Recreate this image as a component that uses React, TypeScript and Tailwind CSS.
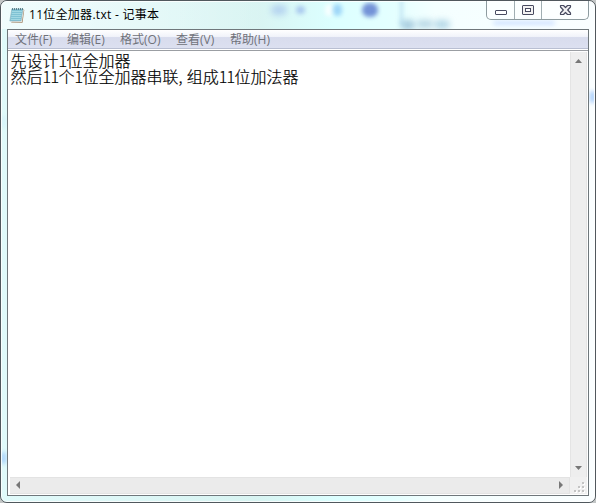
import React from "react";

const menus = [
  { label: "文件", key: "(F)", width: "w-[52px]" },
  { label: "编辑", key: "(E)", width: "w-[53px]" },
  { label: "格式", key: "(O)", width: "w-[56px]" },
  { label: "查看", key: "(V)", width: "w-[54px]" },
  { label: "帮助", key: "(H)", width: "w-[60px]" },
];

const lines = ["先设计1位全加器", "然后11个1位全加器串联,组成11位加法器"];

function TextLine({ text }: { text: string }) {
  return (
    <div className="h-4 whitespace-nowrap">
      {text.split(/([0-9,]+)/).map((part, i) =>
        /^[0-9]/.test(part) ? (
          <span key={i} className="tracking-[-0.6px]">{part}</span>
        ) : part === "," ? (
          <span key={i} className="tracking-[4.2px]">{part}</span>
        ) : (
          <span key={i}>{part}</span>
        ),
      )}
    </div>
  );
}

function NotepadIcon() {
  return (
    <svg width="16" height="17" viewBox="0 0 16 17" className="shrink-0">
      <path d="M2 15.5L13.5 15.8L15.3 3L13.5 2Z" fill="#a08466" />
      <path d="M2 14.8L12.8 15L14.8 3L13.5 2Z" fill="#f4f4ee" />
      <path d="M2.8 2H14L12 14H.8Z" fill="#7fc2d4" stroke="#8cb4bf" strokeWidth=".6" />
      <path d="M3 4.5H13M2.7 6.5H12.6M2.4 8.5H12.3M2.1 10.5H12M1.8 12.5H11.6" stroke="#a9dde7" strokeWidth=".8" />
      <path d="M3.5 1V3M5.5 1V3M7.5 1V3M9.5 1V3M11.5 1V3M13.5 1V3" stroke="#547882" strokeWidth=".9" />
    </svg>
  );
}

function Glow({ place }: { place: string }) {
  return <i className={`pointer-events-none absolute rounded-full ${place}`} />;
}

function WindowButtons() {
  return (
    <div className="absolute right-[6px] top-0 flex h-[19px] w-[103px] rounded-b-[5px] border border-t-0 border-[#8d9b9f] bg-white/50">
      <div className="w-[28px] border-r border-[#a0aeb2]">
        <svg width="27" height="18">
          <rect x="8.5" y="9.5" width="11" height="4" rx=".5" fill="#fff" stroke="#484b60" />
        </svg>
      </div>
      <div className="w-[27px] border-r border-[#a0aeb2]">
        <svg width="26" height="18">
          <rect x="7.5" y="4.5" width="11" height="9" rx=".5" fill="#f3f3f3" stroke="#484b60" />
          <rect x="10.5" y="7.5" width="5" height="3" fill="#fff" stroke="#484b60" />
        </svg>
      </div>
      <svg width="46" height="18">
        <path d="M18.5 4.5H21.5L23.5 6.5L25.5 4.5H28.5V6L25.7 9L28.5 12V13.5H25.5L23.5 11.5L21.5 13.5H18.5V12L21.3 9L18.5 6Z" fill="#f0f0f2" stroke="#484b60" strokeWidth="1.2" strokeLinejoin="round" />
      </svg>
    </div>
  );
}

export default function App() {
  return (
    <div className="h-[503px] w-[596px] overflow-hidden bg-[#c3c6c6]">
      <div className="relative flex h-full flex-col overflow-hidden rounded-[7px] border border-[#50585d] bg-[linear-gradient(90deg,#e0fafa_0%,#dff8f8_15%,#d8f4f2_43%,#dcffff_56%,#e4ffff_66%,#f4ffff_73%,#fafeff_100%)] px-[6px] pb-[6px] font-['Open_Sans','Noto_Sans_CJK_SC',sans-serif]">
        <i className="absolute left-0 top-0 h-[28px] w-[280px] bg-[linear-gradient(90deg,#fff8,#fff0)]" />
        <Glow place="left-[270px] top-[4px] h-[10px] w-4 bg-[#91b0e9]/50 blur-[3px]" />
        <Glow place="left-[295px] top-[5px] h-2 w-[9px] bg-[#88a8e8]/60 blur-[2px]" />
        <Glow place="left-[324px] top-[3px] h-3 w-[8px] bg-white/80 blur-[2px]" />
        <Glow place="left-[332px] top-[3px] h-3 w-[9px] bg-[#83c4f5]/70 blur-[2px]" />
        <Glow place="left-[361px] top-[2px] h-[14px] w-4 bg-[#5877cd]/80 blur-[2px]" />
        <Glow place="left-[399px] top-[-3px] h-[28px] w-[3px] bg-[#96c6e5]/50 blur-[2px]" />
        <Glow place="left-[400px] top-[19px] h-[10px] w-[14px] bg-[#7aa9c8]/60 blur-[3px]" />
        <Glow place="left-[416px] top-[19px] h-[8px] w-[16px] bg-[#7fb0cc]/50 blur-[3px]" />
        <Glow place="left-[433px] top-[19px] h-[9px] w-[16px] bg-[#8ebfd8]/60 blur-[3px]" />
        <Glow place="left-[492px] top-[20px] h-[4px] w-[62px] bg-[#b5d0ff]/60 blur-[2px]" />
        <Glow place="left-0 top-[115px] h-3 w-[5px] bg-[#bde3fb]/30 blur-[2px]" />
        <Glow place="left-0 top-[451px] h-3 w-[5px] bg-[#a5cffa] blur-[2px]" />
        <Glow place="right-0 top-[90px] h-3 w-[5px] bg-[#a5cbfa] blur-[2px]" />
        <i className="absolute inset-0 rounded-[6px] border border-white/80" />
        <WindowButtons />

        <header className="relative flex h-[28px] shrink-0 items-center pl-[2px]">
          <NotepadIcon />
          <span className="ml-1 whitespace-pre text-[12px] leading-4 tracking-[.28px] text-black">11位全加器.txt - 记事本</span>
        </header>

        <main className="relative flex min-h-0 flex-1 flex-col border border-[#6f777b] bg-white">
          <nav className="flex h-[19px] shrink-0 items-center border-b border-[#b9bfd2] bg-[linear-gradient(180deg,#fff_0%,#f1f3fa_36%,#d8dced_42%,#dce0f0_100%)] pl-[7px] pt-[2px] text-[12px] leading-4 text-[#70727a]">
            {menus.map((menu) => (
              <span key={menu.key} className={`${menu.width} whitespace-nowrap`}>{menu.label}{menu.key}</span>
            ))}
          </nav>
          <div className="mt-px flex min-h-0 flex-1 flex-col border-t border-[#9b9ea3] pb-px pl-[2px] pr-px pt-px">
            <div className="flex min-h-0 flex-1">
              <div className="flex-1 pl-[0.5px] font-['Noto_Sans_CJK_SC',sans-serif] text-[16px] font-light leading-[16px] text-black [-webkit-text-stroke:0.2px_#000]">
                {lines.map((line) => <TextLine key={line} text={line} />)}
              </div>
              <div className="flex w-[17px] flex-col items-center justify-between border-x border-[#e4e4e4] bg-[#eee] pb-[7px] pt-[7px]">
                <svg width="7" height="4"><path d="M0 4L3.5 0L7 4Z" fill="#777" /></svg>
                <svg width="7" height="4"><path d="M0 0H7L3.5 4Z" fill="#777" /></svg>
              </div>
            </div>
            <div className="flex h-[17px] shrink-0 bg-[#eee]">
              <div className="flex flex-1 items-center justify-between border-y border-r border-[#e3e3e3] bg-[#ebebeb] pb-[2px] pl-[6px] pr-[6px]">
                <svg width="4" height="8"><path d="M4 0V8L0 4Z" fill="#777" /></svg>
                <svg width="4" height="8"><path d="M0 0V8L4 4Z" fill="#777" /></svg>
              </div>
              <svg width="17" height="17" className="bg-[#f0f0f0]">
                {[[12, 6], [8, 10], [12, 10], [4, 14], [8, 14], [12, 14]].map(([x, y]) => (
                  <g key={`${x}-${y}`}><rect x={x + 1} y={y} width="2" height="2" fill="#fff" /><rect x={x} y={y - 1} width="2" height="2" fill="#c4c4c4" /></g>
                ))}
              </svg>
            </div>
          </div>
        </main>
      </div>
    </div>
  );
}
